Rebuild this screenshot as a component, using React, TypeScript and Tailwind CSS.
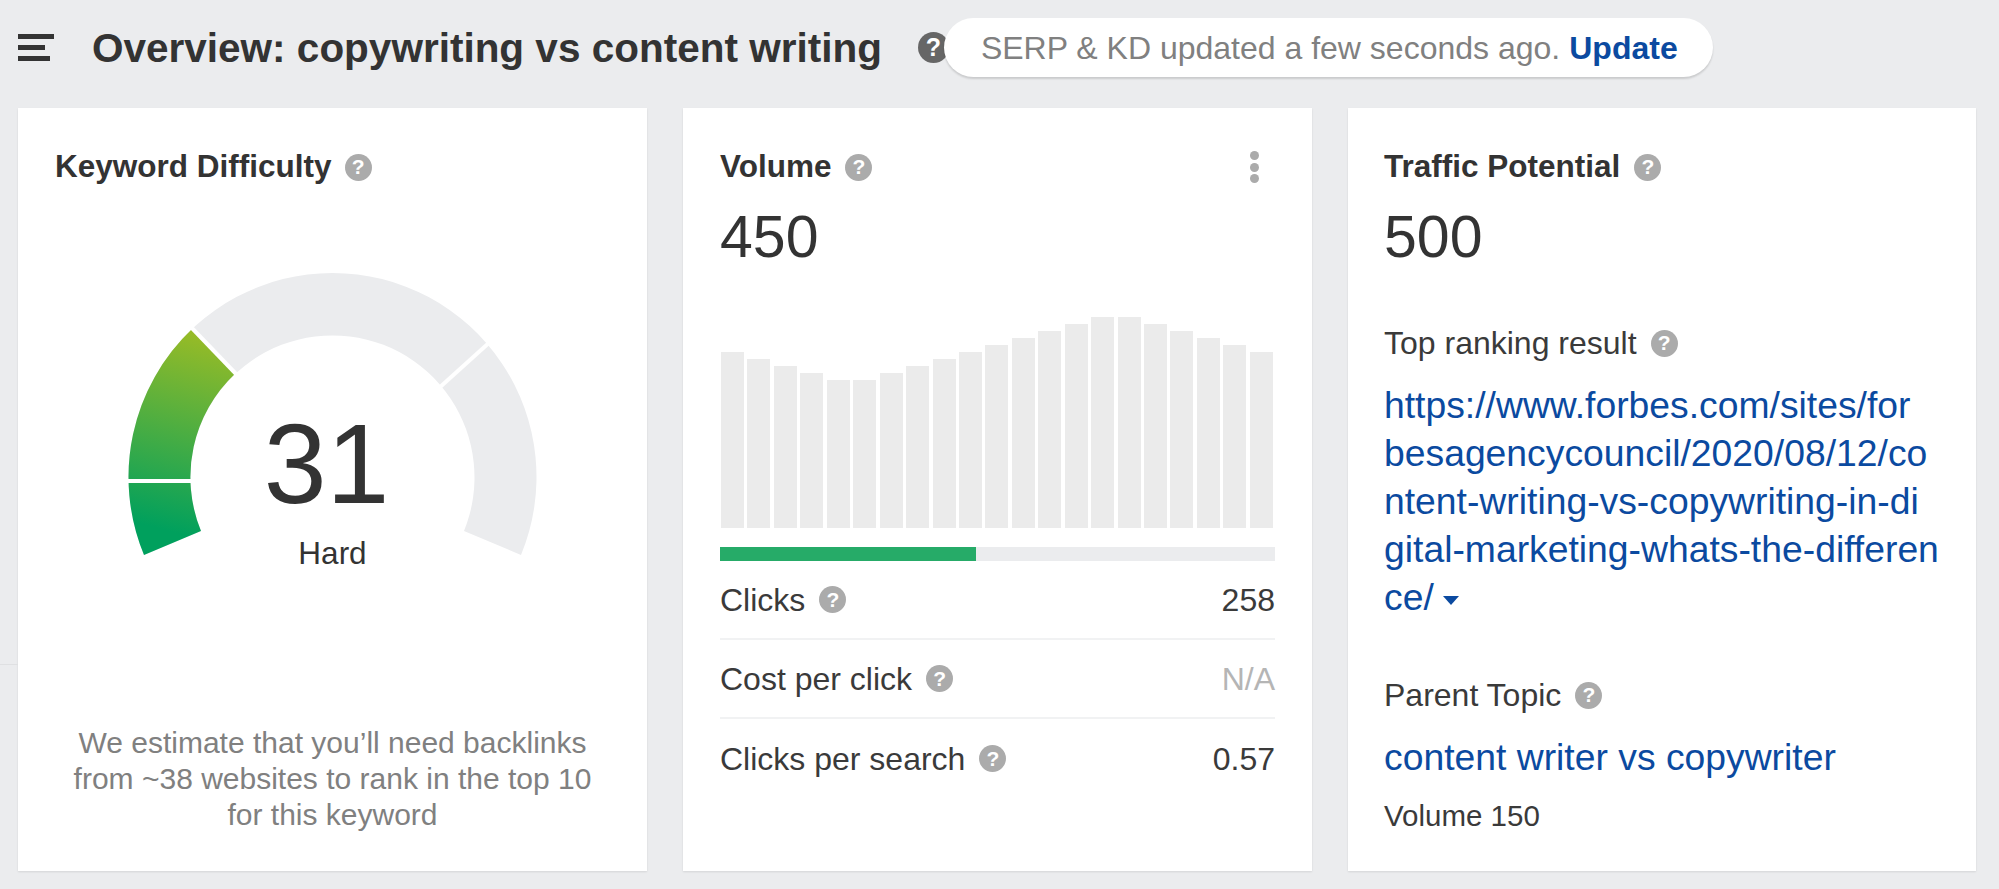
const bars = [176, 169, 162, 155, 148, 148, 155, 162, 169, 176, 183, 190, 197, 204, 211, 211, 204, 197, 190, 183, 176];

function Help({ dark = false }: { dark?: boolean }) {
    return (
        <span className={`inline-flex shrink-0 items-center justify-center rounded-full font-bold text-white ${dark ? "h-[31px] w-[31px] bg-[#666666] text-[25px]" : "h-[27px] w-[27px] bg-[#ababab] text-[21px]"}`}>
            ?
        </span>
    );
}

function Gauge() {
    return (
        <svg width="420" height="300" viewBox="123 262 420 300" className="block">
            <defs>
                <linearGradient id="kd" gradientUnits="userSpaceOnUse" x1="215" y1="340" x2="165" y2="530">
                    <stop offset="0" stopColor="#96bb27" />
                    <stop offset="1" stopColor="#00a05d" />
                </linearGradient>
            </defs>
            {/* grey track */}
            <path d="M 144 555 A 204 204 0 1 1 521 555 L 464 531 A 142 142 0 1 0 201 531 Z" fill="#ebecee" />
            {/* filled part, up to 31 */}
            <path d="M 144 555 A 204 204 0 0 1 192.5 328.6 L 235.1 373.7 A 142 142 0 0 0 201 531 Z" fill="url(#kd)" />
            <line x1="120" y1="481" x2="200" y2="481" stroke="white" strokeWidth="4" />
            <line x1="189" y1="325" x2="238" y2="376" stroke="white" strokeWidth="4" />
            <line x1="491" y1="341" x2="439" y2="388" stroke="white" strokeWidth="4" />
        </svg>
    );
}

function Row({ label, value, muted = false, last = false }: { label: string; value: string; muted?: boolean; last?: boolean }) {
    return (
        <div className={`flex h-[79px] items-center justify-between ${last ? "" : "border-b-2 border-[#f1f2f3]"}`}>
            <div className="flex items-center gap-[14px] text-[32px] text-[#3a3a3a]">
                {label}
                <Help />
            </div>
            <span className={`text-[32px] ${muted ? "text-[#b5b5b5]" : "text-[#3a3a3a]"}`}>{value}</span>
        </div>
    );
}

export default function App() {
    return (
        <div className="relative h-[889px] w-[1999px] overflow-hidden bg-[#ebecee] font-['Liberation_Sans',Arial,sans-serif] text-[#333333]">
            {/* Faint rule from the page behind the first card */}
            <div className="absolute left-0 top-[664px] h-px w-[18px] bg-[#dfe0e2]" />

            {/* Header */}
            <header className="flex h-[108px] items-start pl-[18px]">
                <div className="mt-[34px] flex w-[36px] flex-col gap-[6px]">
                    <div className="h-[5px] w-[36px] bg-[#333333]" />
                    <div className="h-[5px] w-[27px] bg-[#333333]" />
                    <div className="h-[5px] w-[32px] bg-[#333333]" />
                </div>
                <h1 className="ml-[38px] mt-[25px] whitespace-nowrap text-[40.5px] font-bold leading-[46px] text-[#333333]">
                    Overview: copywriting vs content writing
                </h1>
                <div className="ml-[36px] mt-[32px]">
                    <Help dark />
                </div>
                <div className="z-10 ml-[-5px] mt-[18px] flex h-[59px] w-[769px] items-center whitespace-nowrap rounded-full bg-white pl-[37px] text-[32px] text-[#808080] shadow-[0_2px_2px_rgba(0,0,0,0.14)]">
                    SERP &amp; KD updated a few seconds ago.
                    <span className="ml-[9px] font-bold text-[#0b4aa0]">Update</span>
                </div>
            </header>

            {/* Cards */}
            <main className="flex gap-[36px] pl-[18px]">
                {/* Keyword Difficulty */}
                <section className="flex h-[763px] w-[629px] flex-col bg-white px-[37px] shadow-[0_1px_2px_rgba(0,0,0,0.1)]">
                    <div className="mt-[41px] flex h-[36px] items-center gap-[13px] text-[31.5px] font-bold text-[#333333]">
                        Keyword Difficulty
                        <Help />
                    </div>
                    <div className="relative mx-auto mt-[77px] w-[420px]">
                        <Gauge />
                        <div className="absolute left-0 right-0 top-[144px] pr-[12px] text-center text-[113px] leading-[116px] text-[#333333]">31</div>
                        <div className="absolute left-0 right-0 top-[273px] text-center text-[31.5px] leading-[36px] text-[#333333]">Hard</div>
                    </div>
                    <p className="mt-[163px] text-center text-[30px] leading-[36px] text-[#808080]">
                        We estimate that you’ll need backlinks
                        <br />
                        from ~38 websites to rank in the top 10
                        <br />
                        for this keyword
                    </p>
                </section>

                {/* Volume */}
                <section className="flex h-[763px] w-[629px] flex-col bg-white px-[37px] shadow-[0_1px_2px_rgba(0,0,0,0.1)]">
                    <div className="mt-[41px] flex h-[36px] items-center justify-between">
                        <div className="flex items-center gap-[14px] text-[31.5px] font-bold text-[#333333]">
                            Volume
                            <Help />
                        </div>
                        <div className="mr-[16px] flex flex-col gap-[2.5px]">
                            <div className="h-[9px] w-[9px] rounded-full bg-[#ababab]" />
                            <div className="h-[9px] w-[9px] rounded-full bg-[#ababab]" />
                            <div className="h-[9px] w-[9px] rounded-full bg-[#ababab]" />
                        </div>
                    </div>
                    <div className="mt-[19px] text-[59px] leading-[66px] text-[#333333]">450</div>
                    <div className="mt-[41px] flex h-[217px] items-end justify-between pl-[1px] pr-[2px]">
                        {bars.map((h, i) => (
                            <div key={i} className="w-[23px] bg-[#ebebeb]" style={{ height: h }} />
                        ))}
                    </div>
                    <div className="mt-[19px] h-[14px] w-full bg-[#ebecee]">
                        <div className="h-full w-[256px] bg-[#26ab68]" />
                    </div>
                    <Row label="Clicks" value="258" />
                    <Row label="Cost per click" value="N/A" muted />
                    <Row label="Clicks per search" value="0.57" last />
                </section>

                {/* Traffic Potential */}
                <section className="flex h-[763px] w-[628px] flex-col bg-white pl-[36px] shadow-[0_1px_2px_rgba(0,0,0,0.1)]">
                    <div className="mt-[41px] flex h-[36px] items-center gap-[14px] text-[31.5px] font-bold text-[#333333]">
                        Traffic Potential
                        <Help />
                    </div>
                    <div className="mt-[19px] text-[59px] leading-[66px] text-[#333333]">500</div>
                    <div className="mt-[53px] flex h-[40px] items-center gap-[14px] text-[32px] text-[#3a3a3a]">
                        Top ranking result
                        <Help />
                    </div>
                    <div className="mt-[18px] whitespace-nowrap text-[37.3px] leading-[48px] text-[#0b4aa0]">
                        https://www.forbes.com/sites/for
                        <br />
                        besagencycouncil/2020/08/12/co
                        <br />
                        ntent-writing-vs-copywriting-in-di
                        <br />
                        gital-marketing-whats-the-differen
                        <br />
                        <span className="inline-flex items-center gap-[9px]">
                            ce/
                            <span className="mt-[6px] h-0 w-0 border-x-[8px] border-t-[9px] border-x-transparent border-t-[#0b4aa0]" />
                        </span>
                    </div>
                    <div className="mt-[54px] flex h-[40px] items-center gap-[14px] text-[32px] text-[#3a3a3a]">
                        Parent Topic
                        <Help />
                    </div>
                    <div className="mt-[18px] text-[37.3px] leading-[48px] text-[#0b4aa0]">content writer vs copywriter</div>
                    <div className="mt-[19px] text-[29.5px] leading-[32px] text-[#3a3a3a]">Volume 150</div>
                </section>
            </main>
        </div>
    );
}
